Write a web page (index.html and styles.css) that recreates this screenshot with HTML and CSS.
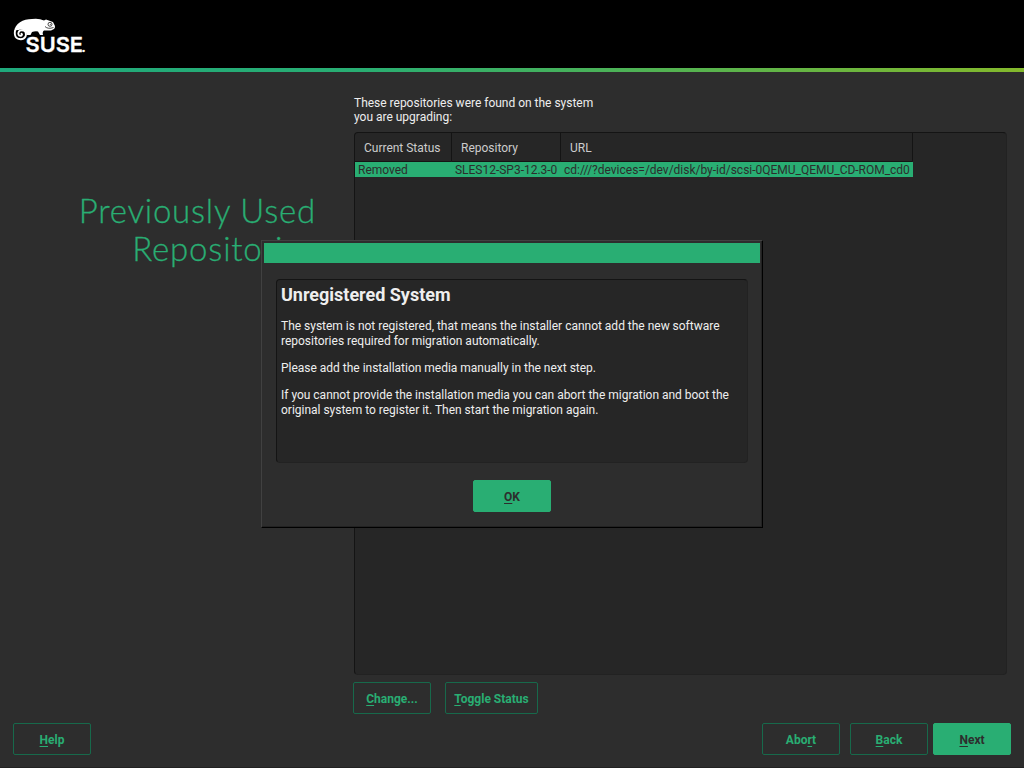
FILE: index.html
```html
<!DOCTYPE html>
<html lang="en">
<head>
<meta charset="utf-8">
<title>Previously Used Repositories</title>
<link rel="stylesheet" href="styles.css">
</head>
<body>
<div class="installer">
  <header class="banner">
    <svg class="logo" width="74" height="38" viewBox="0 0 74 38" role="img" aria-label="SUSE">
      <path fill="#fff" d="M1 14C2 5 10 1 19 1Q26 0 31 2.500L33 1.500 40 4 41 6Q43 9 41 11L38 12.500 31 12.500Q29 14 30 17H27L25 13.500Q22 13 19 14L17.500 17H13.500V15.500L11.500 13 4 12Z"/>
      <path fill="#000" d="M3.500 15Q4 11.500 8 11.500Q12.500 12 12.500 16.500Q12 20 8 20Q4 20 3.500 15Z"/>
      <path fill="none" stroke="#fff" stroke-width="1.900" stroke-linecap="round" d="M2 13Q1 19 5 20.700Q10 22.500 12.500 18.500Q14 14 10.500 12.500Q6 11.500 5.300 15.300Q5.500 18.500 8.500 17.500Q9.500 16.500 8.500 15.800"/>
      <circle cx="37" cy="6.300" r="2" fill="#fff" stroke="#000" stroke-width=".7"/>
      <circle cx="37.300" cy="6.200" r=".5" fill="#000"/>
      <path fill="none" stroke="#000" stroke-width=".7" d="M32 8.500Q35 11.500 40.500 9.500"/>
      <text class="wordmark" x="12.500" y="34" textLength="57.500" lengthAdjust="spacingAndGlyphs">SUSE</text>
      <text class="wordmark dot" x="68.500" y="34">.</text>
    </svg>
  </header>
  <main class="content">
    <aside class="side"><h1>Previously Used<br>Repositories</h1></aside>
    <section class="panel">
      <p class="intro">These repositories were found on the system<br>you are upgrading:</p>
      <div class="table">
        <div class="row head"><span>Current Status</span><span>Repository</span><span>URL</span></div>
        <div class="row selected"><span>Removed</span><span>SLES12-SP3-12.3-0</span><span>cd:///?devices=/dev/disk/by-id/scsi-0QEMU_QEMU_CD-ROM_cd0</span></div>
      </div>
      <div class="actions">
        <button class="btn"><u>C</u>hange...</button>
        <button class="btn wide"><u>T</u>oggle Status</button>
      </div>
    </section>
  </main>
  <footer class="nav">
    <button class="btn help"><u>H</u>elp</button>
    <button class="btn abort">Abo<u>r</u>t</button>
    <button class="btn back"><u>B</u>ack</button>
    <button class="btn primary"><u>N</u>ext</button>
  </footer>
</div>
<div class="dialog" role="dialog">
  <div class="titlebar"></div>
  <div class="message">
    <h2>Unregistered System</h2>
    <p>The system is not registered, that means the installer cannot add the new software<br>repositories required for migration automatically.</p>
    <p>Please add the installation media manually in the next step.</p>
    <p>If you cannot provide the installation media you can abort the migration and boot the<br>original system to register it. Then start the migration again.</p>
  </div>
  <button class="btn primary"><u>O</u>K</button>
</div>
</body>
</html>
```
FILE: styles.css
```css
* { box-sizing: border-box; }
body {
  margin: 0;
  background: #2d2d2d;
  color: #eee;
  font: 12px/14px Roboto, sans-serif;
  letter-spacing: -.012px;
}
.installer {
  display: flex;
  flex-direction: column;
  width: 1024px;
  height: 768px;
  overflow: hidden;
}
.banner {
  flex: none;
  height: 72px;
  padding: 18px 13px;
  background: linear-gradient(90deg, #1fa97c, #29ae73 35%, #84b92c) 0 100% / 100% 4px no-repeat #000;
}
.logo { display: block; }
.wordmark {
  font: 600 20.500px Inter, sans-serif;
  letter-spacing: 0;
  fill: #fff;
  stroke: #fff;
  stroke-width: .3px;
}
.dot { font-size: 13px; }
.content { display: flex; height: 642px; }
.side { width: 316px; padding-top: 119px; flex: none; }
h1 {
  margin: 0;
  color: #29ae73;
  font: 300 33px/38px Lato, sans-serif;
  letter-spacing: .8px;
  -webkit-text-stroke: .3px #29ae73;
  text-align: right;
  white-space: nowrap;
}
.panel { width: 654px; margin-left: 37px; padding-top: 24px; }
.intro { margin: 0 0 8px 1px; white-space: nowrap; }
.table {
  height: 543px;
  width: 653px;
  margin-left: 1px;
  border: 1px solid #222;
  border-top-color: #141414;
  border-left-color: #141414;
  border-radius: 4px;
  background: #262626;
}
.row { display: grid; grid-template-columns: 97px 109px 352px; width: 558px; white-space: nowrap; }
.head { height: 29px; line-height: 30px; color: #ccc; grid-template-rows: 29px; }
.head span {
  padding-left: 9px;
  border-right: 1px solid #141414;
  border-bottom: 1px solid #141414;
  border-radius: 0 0 2px 0;
}
.selected { height: 15px; line-height: 16px; background: #29ae73; color: #2d2d2d; }
.selected span { padding-left: 3px; }
.actions { display: flex; gap: 14px; margin-top: 7px; }
.btn {
  display: block;
  flex: none;
  width: 78px;
  height: 32px;
  padding: 2px 0 0;
  border: 1px solid #17694b;
  border-radius: 2px;
  background: transparent;
  color: #29ae73;
  font: 700 12px/14px Roboto, sans-serif;
  text-align: center;
}
.btn u { text-decoration-thickness: 1px; text-underline-offset: 2px; text-decoration-skip-ink: none; }
.wide { width: 93px; }
.primary { background: #29ae73; border-color: #29ae73; color: #2d2d2d; }
.nav {
  display: flex;
  height: 54px;
  padding: 9px 13px 0;
  border-bottom: 1px solid #222;
}
.abort { margin-left: auto; margin-right: 10px; }
.back { margin-right: 5px; }
.dialog {
  position: absolute;
  left: 261px;
  top: 240px;
  width: 502px;
  height: 288px;
  padding: 2px;
  border: 1px solid #000;
  border-top-color: #414141;
  border-left-color: #414141;
  background: #2d2d2d;
  box-shadow: inset -1px -1px #222;
}
.titlebar { width: 496px; height: 20px; background: #29ae73; }
.message {
  width: 472px;
  height: 184px;
  margin: 16px 0 17px 12px;
  padding: 4px;
  border: 1px solid #222;
  border-top-color: #141414;
  border-left-color: #141414;
  border-radius: 4px;
  background: #262626;
  line-height: 15px;
  white-space: nowrap;
}
h2 { margin: 0 0 13px; font: 700 18px/22px Roboto, sans-serif; }
.message p { margin: 0 0 12px; }
.dialog .btn { margin-left: 209px; }
```
